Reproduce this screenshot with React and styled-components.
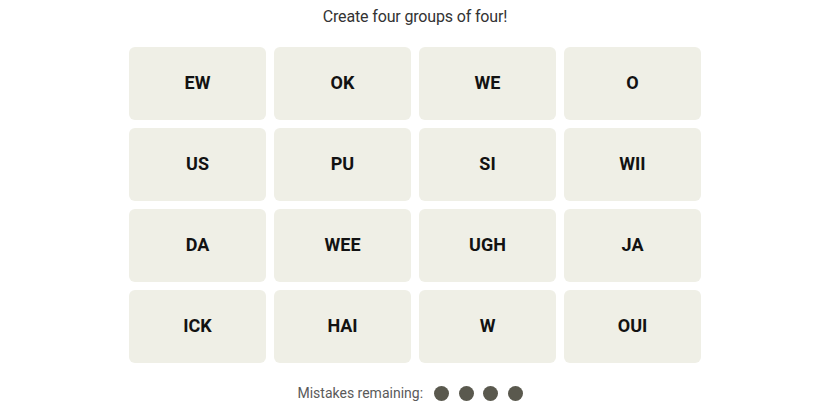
import React from "react";
import styled, { createGlobalStyle } from "styled-components";

const GlobalStyle = createGlobalStyle`
  html, body { margin: 0; padding: 0; background: #ffffff; }
  body { font-family: Roboto, "Liberation Sans", Arial, sans-serif; }
`;

const Page = styled.main`
  width: 825px;
  height: 413px;
  box-sizing: border-box;
  padding: 7px 0 0 5px;
  display: flex;
  flex-direction: column;
  align-items: center;
`;

const Prompt = styled.p`
  margin: 0;
  height: 20px;
  line-height: 20px;
  font-size: 16px;
  letter-spacing: -0.15px;
  color: #333333;
`;

const Board = styled.div`
  margin-top: 20px;
  display: grid;
  grid-template-columns: repeat(4, 137px);
  grid-auto-rows: 73px;
  gap: 8px;
`;

const Tile = styled.button`
  border: none;
  border-radius: 6px;
  background: #efefe6;
  color: #121212;
  font-family: Roboto, "Liberation Sans", Arial, sans-serif;
  font-weight: 700;
  font-size: 18px;
  line-height: 20px;
  text-transform: uppercase;
  display: flex;
  align-items: center;
  justify-content: center;
  padding: 0 0 2px;
  cursor: pointer;
`;

const Footer = styled.div`
  margin: 20px 10px 0 0;
  height: 20px;
  display: flex;
  align-items: center;
  gap: 11px;
`;

const FooterLabel = styled.span`
  font-size: 14px;
  color: #5a5a5a;
  line-height: 20px;
`;

const Dots = styled.div`
  display: flex;
  gap: 9.5px;
  padding-top: 1px;
`;

const Dot = styled.span`
  width: 15px;
  height: 15px;
  border-radius: 50%;
  background: #5a594e;
`;

const words = [
  "EW", "OK", "WE", "O",
  "US", "PU", "SI", "WII",
  "DA", "WEE", "UGH", "JA",
  "ICK", "HAI", "W", "OUI",
];

export default function App() {
  return (
    <>
      <GlobalStyle />
      <Page>
        <Prompt>Create four groups of four!</Prompt>
        <Board>
          {words.map((w) => (
            <Tile key={w}>{w}</Tile>
          ))}
        </Board>
        <Footer>
          <FooterLabel>Mistakes remaining:</FooterLabel>
          <Dots>
            {[0, 1, 2, 3].map((i) => (
              <Dot key={i} />
            ))}
          </Dots>
        </Footer>
      </Page>
    </>
  );
}
